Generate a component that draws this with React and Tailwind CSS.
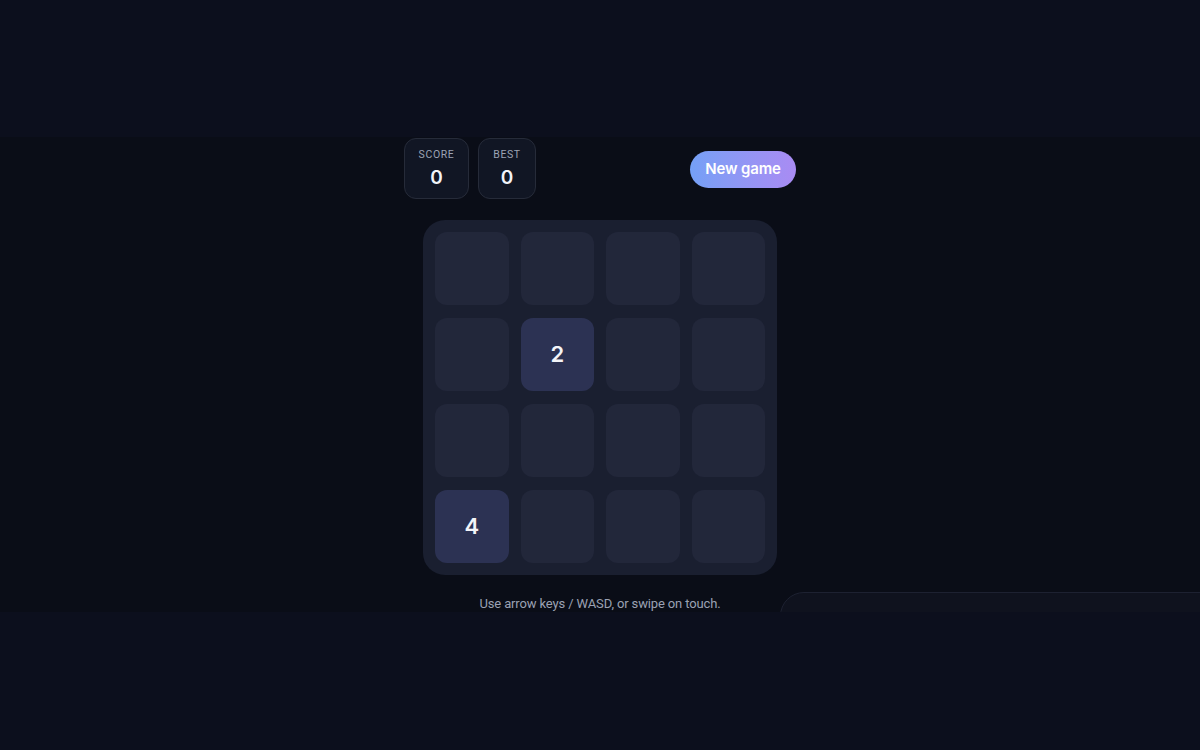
export default function App() {
  const cells = [
    null, null, null, null,
    null, 2, null, null,
    null, null, null, null,
    4, null, null, null,
  ];
  return (
    <div className="w-[1200px] h-[750px] flex flex-col bg-[#0c0f1d] overflow-hidden" style={{ fontFamily: 'Inter, "Noto Sans", sans-serif' }}>
      <div className="h-[137px] shrink-0 bg-[#0c0f1d]" />
      <div className="relative h-[475px] shrink-0 bg-[#0a0d17] overflow-hidden">
        <div className="w-[392px] mx-auto pt-px flex flex-col items-center">
          <div className="w-full flex items-center justify-between">
            <div className="flex gap-[9px]">
              <div className="w-[65px] h-[61px] rounded-[12px] border border-[#262b39] bg-[#111624] flex flex-col items-center justify-center">
                <span className="text-[10.5px] tracking-[0.06em] text-[#9ca3b4] leading-none" style={{ fontFamily: 'Roboto, sans-serif' }}>SCORE</span>
                <span className="mt-[7px] text-[19px] font-semibold text-[#f1f3f8] leading-none" style={{ fontFamily: 'Inter, sans-serif' }}>0</span>
              </div>
              <div className="w-[58px] h-[61px] rounded-[12px] border border-[#262b39] bg-[#111624] flex flex-col items-center justify-center">
                <span className="text-[10.5px] tracking-[0.06em] text-[#9ca3b4] leading-none" style={{ fontFamily: 'Roboto, sans-serif' }}>BEST</span>
                <span className="mt-[7px] text-[19px] font-semibold text-[#f1f3f8] leading-none" style={{ fontFamily: 'Inter, sans-serif' }}>0</span>
              </div>
            </div>
            <button className="mt-[2px] w-[106px] h-[37px] rounded-full bg-gradient-to-r from-[#74a0f6] to-[#a98bf3] text-white text-[15px] font-semibold tracking-[-0.01em]" style={{ fontFamily: 'Inter, sans-serif' }}>
              New game
            </button>
          </div>
          <div className="mt-[21px] w-[354px] h-[355px] rounded-[22px] bg-[#1a1f30] p-[12px] grid grid-cols-4 grid-rows-4 gap-x-[12px] gap-y-[13px]">
            {cells.map((v, i) => (
              <div
                key={i}
                className={
                  "rounded-[12px] flex items-center justify-center " +
                  (v ? "bg-[#2c3253]" : "bg-[#22273a]")
                }
              >
                {v ? (
                  <span className="text-[22px] font-semibold text-[#f3f4f8]" style={{ fontFamily: 'Inter, sans-serif' }}>{v}</span>
                ) : null}
              </div>
            ))}
          </div>
          <p className="mt-[19px] text-[13px] text-[#9ba1b3] tracking-[-0.01em]" style={{ fontFamily: 'Roboto, sans-serif' }}>
            Use arrow keys / WASD, or swipe on touch.
          </p>
        </div>
        <div className="absolute left-[780px] top-[455px] w-[460px] h-[100px] rounded-tl-[24px] border border-[#1d2131] bg-[#0f121e]" />
      </div>
      <div className="flex-1 bg-[#0c0f1d]" />
    </div>
  );
}
